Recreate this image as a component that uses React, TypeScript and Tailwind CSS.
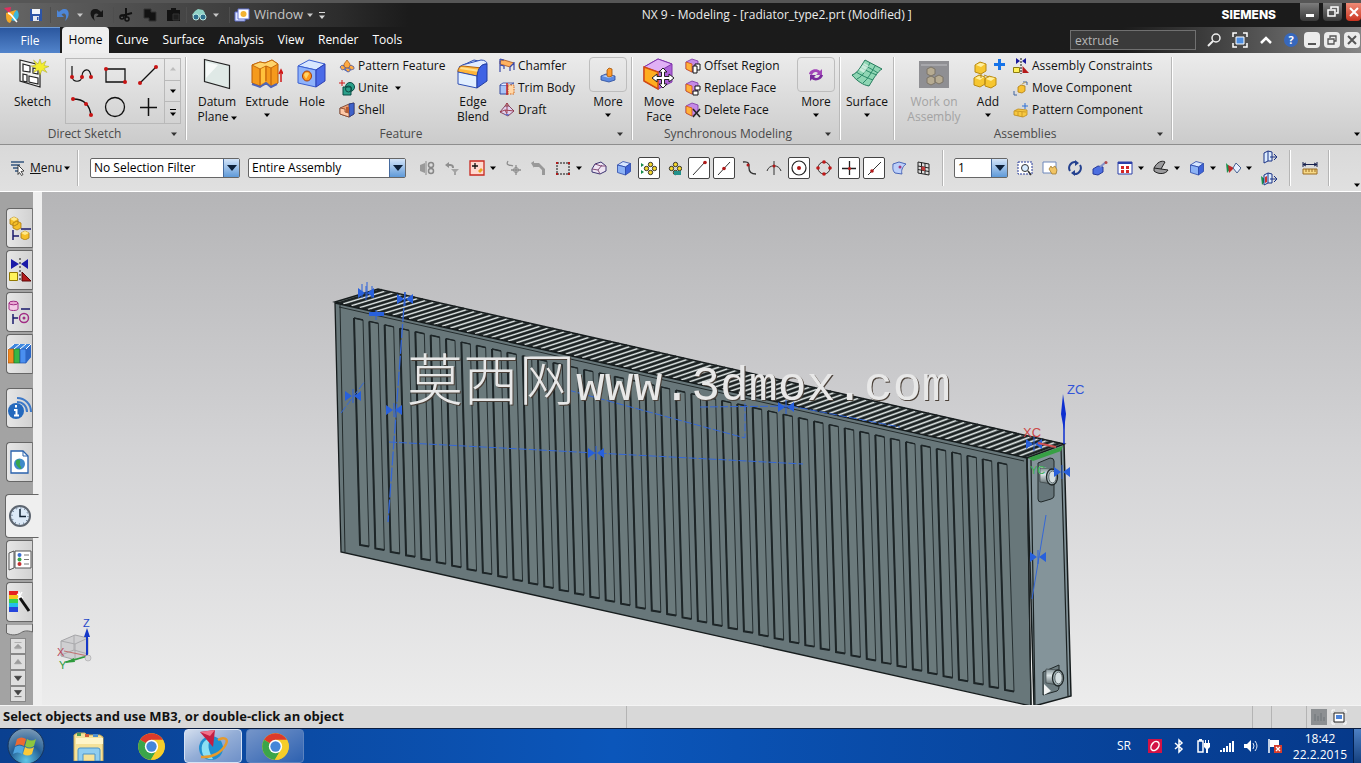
import type { ReactNode } from "react";
import clsx from "clsx";

// ─── Shared pieces ────────────────────────────────────────────────────────────

type IconProps = { children: ReactNode; size?: number; box?: number };

function Icon({ children, size = 16, box = 16 }: IconProps) {
  return (
    <svg
      width={size}
      height={size}
      viewBox={`0 0 ${box} ${box}`}
      fill="none"
      className="shrink-0"
      aria-hidden="true"
    >
      {children}
    </svg>
  );
}

function Caret({ className = "text-black" }: { className?: string }) {
  return (
    <svg width="6" height="4" viewBox="0 0 6 4" className={clsx("shrink-0", className)} aria-hidden="true">
      <path d="M0 0.5h6L3 4z" fill="currentColor" />
    </svg>
  );
}

function Cube({ top, left, right, stroke }: { top: string; left: string; right: string; stroke: string }) {
  return (
    <g stroke={stroke} strokeWidth="0.8" strokeLinejoin="round">
      <path d="M1.5 5L7 1.5l7.5 2L9.500 7z" fill={top} />
      <path d="M1.500 5L9.500 7v8L1.500 12.500z" fill={left} />
      <path d="M9.500 7l5-3.500v8L9.500 15z" fill={right} />
    </g>
  );
}

// ─── Ribbon icons ─────────────────────────────────────────────────────────────

const sketchIcon = (
  <Icon size={32} box={32}>
    <path d="M3 2l20 5v22L3 23z" fill="#f4f4f2" stroke="#222" strokeWidth="1.200" />
    <path d="M6 6l7 2v6l-7-1zM16 10l5 1v5l-5-1zM6 16l4 1v7l-4-1zM12 18l9 2v6l-9-2z" fill="#fff" stroke="#222" strokeWidth="1.200" />
    <path d="M23 1l1.500 5L29 3l-2 4.500 5 1-5 2 3 4-5-2.500L23 17l-1.500-5-5 2.500L19 10l-5-2 5-1-2.500-5L21 6z" fill="#f3ee2f" stroke="#a8a52a" strokeWidth="0.500" />
  </Icon>
);

const datumIcon = (
  <Icon size={32} box={32}>
    <path d="M3.500 1.500l25 6v23l-25-7z" fill="#dfe9e6" stroke="#222" strokeWidth="1.200" />
    <path d="M5 4l12 3L5 20z" fill="#fff" opacity="0.7" />
  </Icon>
);

const extrudeIcon = (
  <Icon size={32} box={32}>
    <path d="M1 7l8-3 5 1 7-3 6 4v19l-7 4-4-3-7 2-8-3z" fill="#f59a1c" stroke="#b75a07" />
    <path d="M1 7l8-3 5 1 7-3 6 4-7 4-5-2-6 3z" fill="#ffd46a" stroke="#c66b0c" />
    <path d="M9 11v17M15 8v15M20 10v18" stroke="#b75a07" />
    <path d="M10 11l4-2v15l-4 2z" fill="#ffc23c" />
    <path d="M1 26l8 3 6-4 5 4 6-3" stroke="#4f65b5" strokeWidth="2" />
    <path d="M30 24V13M28 16l2-4 2 4" stroke="#d01818" strokeWidth="1.500" />
  </Icon>
);

const holeIcon = (
  <Icon size={32} box={32}>
    <path d="M2 8L13 2l16 4-9 6z" fill="#d7e6ff" stroke="#3a5fd0" />
    <path d="M2 8l18 4v17L2 25z" fill="#8fb3fb" stroke="#3a5fd0" />
    <path d="M20 12l9-6v17l-9 6z" fill="#4b6be8" stroke="#2c3fb0" />
    <ellipse cx="11" cy="18" rx="4.500" ry="5" fill="#ff9a1f" stroke="#a33c08" />
    <path d="M8 17c1-3 4-3 5-1l-3 5z" fill="#ffd36a" />
  </Icon>
);

const edgeBlendIcon = (
  <Icon size={32} box={32}>
    <path d="M2 9L17 2l13 3-8 8z" fill="#cfe2ff" stroke="#2e4fb4" />
    <path d="M1 14c0-5 3-7 8-8l15-4c4 0 6 2 6 4-6 0-9 4-10 12z" fill="#e2edff" stroke="#2e4fb4" />
    <path d="M1 14c0-4 2-6 5-6l19 2c-3 2-4 4-5 8z" fill="#ffb53a" stroke="#b5650b" />
    <path d="M4 9l19 3-1 2L3 11z" fill="#ffe08d" />
    <path d="M1 14l19 4v12L1 26z" fill="#e2efff" stroke="#2e4fb4" />
    <path d="M20 18c1-8 4-12 10-12v17l-10 7z" fill="#3f63e4" stroke="#233d9f" />
  </Icon>
);

const moveFaceIcon = (
  <Icon size={32} box={32}>
    <path d="M1 9L15 1l14 5v18l-14 7-14-8z" fill="#ad62d8" stroke="#8136ad" />
    <path d="M1 9L15 1l14 5-14 8z" fill="#e0b0f5" stroke="#8136ad" />
    <path d="M1 9l14 5v17L1 23z" fill="#ffad20" stroke="#d34b12" strokeWidth="1.500" />
    <path
      d="M20 10l4 4h-2.500v4.500H26V16l5 4-5 4v-2.500h-4.500V26H24l-4 4-4-4h2.500v-4.500H14V24l-5-4 5-4v2.500h4.500V14H16z"
      fill="#fff"
      stroke="#222"
    />
  </Icon>
);

const surfaceIcon = (
  <Icon size={32} box={32}>
    <path d="M1 17C7 15 10 8 14 2l17 9c-5 3-8 9-13 17C12 27 6 23 1 17z" fill="#8fd6b4" stroke="#237b5b" />
    <path d="M6 21c6-3 9-9 13-16M12 25c5-4 8-10 12-17M5 14c5 3 11 6 17 8M9 9c5 3 11 6 17 8M11 6c5 3 10 5 16 9" stroke="#2c8a69" />
    <path d="M8 12l5-7 5 3-5 7z" fill="#e2f7ec" opacity="0.7" />
  </Icon>
);

const workIcon = (
  <Icon size={32} box={32}>
    <path d="M1 3h30v27H1z" fill="#8f8f93" />
    <path d="M3 6h26v2H3z" fill="#a7a7ab" />
    <path d="M9 11l4-2 4 2v5l-4 2-4-2zM17 19l4-2 4 2v5l-4 2-4-2zM9 20l4-2 4 2v5l-4 2-4-2z" fill="#b6ab92" stroke="#7c7568" />
  </Icon>
);

const addIcon = (
  <Icon size={32} box={32}>
    <g fill="#f6c630" stroke="#b98a12">
      <path d="M3 7l5-3 6 2v7l-5 3-6-2zM2 20l5-3 6 2v7l-5 3-6-2zM13 21l4-3 7 2v7l-5 3-6-2z" />
    </g>
    <path d="M4 7l4-2 5 1-4 3zM3 20l4-2 5 1-4 3zM14 21l3-2 6 1-4 3z" fill="#fff0a0" />
    <path d="M9 16v4M12 17l5 2" stroke="#b98a12" />
  </Icon>
);

const patternFeatureIcon = (
  <Icon>
    <path d="M1 9l7-3 7 3-6 5z" fill="#a9bff0" stroke="#3553b4" strokeWidth="0.800" />
    <path d="M5 6l3-4 3 4v3l-3 1-3-1z" fill="#ffaa42" stroke="#a5540f" strokeWidth="0.700" />
    <path d="M1 9l2-2 3 2v2l-3 1zM10 9l2-2 3 2v2l-3 1zM6 11l2-1 3 1v2l-2 1z" fill="#ffaa42" stroke="#4a5aa8" strokeWidth="0.700" />
  </Icon>
);

const uniteIcon = (
  <Icon>
    <path d="M3 0v6M0 3h6" stroke="#d01818" />
    <circle cx="11" cy="7" r="4.500" fill="#2ba08a" stroke="#0b4a42" />
    <path d="M4 7h8v8H4z" fill="#2ba08a" stroke="#0b4a42" />
    <circle cx="9.500" cy="9" r="3" stroke="#0b4a42" />
  </Icon>
);

const shellIcon = (
  <Icon>
    <path d="M1 6l9-4 5-1v11l-5 3-9-3z" fill="#ef9e70" stroke="#6b3a2b" strokeWidth="0.800" />
    <path d="M10 2l5-1v11l-5 3z" fill="#3f62c9" stroke="#253b88" strokeWidth="0.800" />
    <path d="M1 6l5 1v3l4 1v4l-9-3z" fill="#ffc8a6" stroke="#7f4128" strokeWidth="0.800" />
    <path d="M7 5h3v6l-3-1z" fill="#b85a30" />
  </Icon>
);

const chamferIcon = (
  <Icon>
    <path d="M1 3l4-1 10 3-4 4-10-3z" fill="#ffb260" stroke="#a34d1b" strokeWidth="0.800" />
    <path d="M1 1v13M1 1l4 1M11 9v4M15 4v8M11 9l4-4M1 7l4 1v3" stroke="#3948a8" strokeWidth="1.200" />
  </Icon>
);

const trimIcon = (
  <Icon>
    <path d="M1 5h8v9H1z" fill="#a9c4f6" stroke="#34489f" />
    <path d="M1 5l3-2h11l-4 2" fill="#e5edff" stroke="#34489f" strokeWidth="0.800" />
    <path d="M9 5h6v9H9z" fill="#ffd7a8" stroke="#d06418" strokeDasharray="1.500 1" />
    <path d="M8 3v12" stroke="#c92020" strokeWidth="1.500" />
  </Icon>
);

const draftIcon = (
  <Icon>
    <path d="M1 10l5-6h4l5 5-6 5z" fill="#dfd2ee" stroke="#7a3350" strokeWidth="0.900" />
    <path d="M1 10l5-2 9 1M6 8l3 6M8 1v10M6 4l2-3 2 3" stroke="#993243" strokeWidth="0.900" />
    <path d="M5 12h5l-1 2z" fill="#5b73cc" />
  </Icon>
);

const moreFeatureIcon = (
  <Icon>
    <path d="M1 9l5-2 9 2v4l-6 2-8-2z" fill="#5f8be0" stroke="#274a9b" strokeWidth="0.800" />
    <path d="M2 9l5-1 7 1-5 2z" fill="#b8d1fb" />
    <path d="M7 3l2-2 3 1v7l-3 1-2-1z" fill="#ff9b2b" stroke="#a1540a" strokeWidth="0.800" />
  </Icon>
);

const moreSyncIcon = (
  <Icon>
    <path d="M1 7c1-5 8-6 11-3l2-2v6H8l2-2C8 4 5 5 4 8z" fill="#a246b8" />
    <path d="M15 8c-1 5-8 7-11 4l-2 2V8h6l-2 2c2 2 5 1 6-2z" fill="#7a2c9c" />
  </Icon>
);

const faceCube = (
  <g strokeWidth="0.800">
    <path d="M1 4l6-3 6 2v7l-6 4-6-3z" fill="#c48ae6" stroke="#7a34a5" />
    <path d="M1 4l6 2v8l-6-3z" fill="#ffb13b" stroke="#cf5417" />
  </g>
);

const offsetRegionIcon = (
  <Icon>
    {faceCube}
    <path d="M8 8h4v7H8zM10 8V6h5v6h-3" fill="#fff" stroke="#111" />
  </Icon>
);

const replaceFaceIcon = (
  <Icon>
    {faceCube}
    <path d="M10 6h5v4h-5zM8 11h5v4H8z" fill="#fff" stroke="#111" />
  </Icon>
);

const deleteFaceIcon = (
  <Icon>
    {faceCube}
    <path d="M8 7l7 8M15 7l-7 8" stroke="#222" strokeWidth="1.500" />
  </Icon>
);

const constraintsIcon = (
  <Icon>
    <path d="M3 0l4 3-4 3zM13 0L9 3l4 3z" fill="#1a1a9c" />
    <path d="M8 0v16" stroke="#111" strokeDasharray="2 1" />
    <path d="M0.500 9.500h6v5h-6z" fill="#fff05a" stroke="#8d7d11" />
    <path d="M9.500 8v7H16z" fill="#b51a1a" />
  </Icon>
);

const moveComponentIcon = (
  <Icon>
    <path d="M5 7l3-2 4 1v5l-3 2-4-1z" fill="#f7c234" stroke="#ad7b12" strokeWidth="0.800" />
    <path d="M1 11v4h3M10 2h4v3" stroke="#41649f" />
    <path d="M9 4l4-2" stroke="#c2a55b" />
  </Icon>
);

const patternComponentIcon = (
  <Icon>
    <path d="M1 9l4-2 9 1v5l-4 2-9-2z" fill="#f7c840" stroke="#bd8a1a" strokeWidth="0.800" />
    <path d="M5 10v4M9 10v5M2 9l11 1" stroke="#bd8a1a" strokeWidth="0.700" />
    <path d="M12 1v6M9 4h6" stroke="#2c71d8" />
  </Icon>
);

// ─── Ribbon ───────────────────────────────────────────────────────────────────

type BigButtonProps = {
  icon: ReactNode;
  label: string;
  width: string;
  caret?: "inline" | "below";
  disabled?: boolean;
};

function BigButton({ icon, label, width, caret, disabled }: BigButtonProps) {
  return (
    <button
      disabled={disabled}
      className={clsx(
        "flex flex-col items-center pt-[5px] text-[12px] leading-[15px]",
        disabled ? "text-[#a3a3a3]" : "text-[#111]",
        width
      )}
    >
      {icon}
      <span className="mt-1">
        {label}
        {caret === "inline" && (
          <span className="ml-0.5 inline-block align-middle">
            <Caret />
          </span>
        )}
      </span>
      {caret === "below" && (
        <span className="mt-1">
          <Caret />
        </span>
      )}
    </button>
  );
}

function MoreButton({ icon }: { icon: ReactNode }) {
  return (
    <button className="flex w-[38px] flex-col items-center pt-1 text-[12px] leading-[15px] text-[#111]">
      <span className="flex h-[35px] w-full items-center justify-center rounded-sm border border-[#bdbdbd]">
        {icon}
      </span>
      <span className="mt-0.5">More</span>
      <span className="mt-1">
        <Caret />
      </span>
    </button>
  );
}

function SmallButton({ icon, label, caret }: { icon: ReactNode; label: string; caret?: boolean }) {
  return (
    <button className="flex h-[22px] items-center gap-[3px] text-[12px] whitespace-nowrap text-[#111]">
      {icon}
      {label}
      {caret && (
        <span className="ml-1">
          <Caret />
        </span>
      )}
    </button>
  );
}

function RibbonGroup({ label, children, launcher = true }: { label: string; children: ReactNode; launcher?: boolean }) {
  return (
    <section className="flex shrink-0 items-stretch">
      <div className="flex flex-col">
        <div className="flex h-[72px]">{children}</div>
        <div className="relative flex h-[18px] items-center justify-center pr-4 text-[12px] text-[#4a4a4a]">
          {label}
          {launcher && (
            <span className="absolute right-2">
              <Caret className="text-[#333]" />
            </span>
          )}
        </div>
      </div>
      <div className="my-1 w-0.5 border-l border-[#b9b9b9] bg-white" />
    </section>
  );
}

function SketchGallery() {
  return (
    <div className="mt-[5px] mr-1 flex h-[66px] w-[116px] border border-[#b9b9b9]">
      <div className="grid flex-1 grid-cols-3 place-items-center">
        <button aria-label="Profile">
          <Icon size={24} box={24}>
            <path d="M2 3v10c0 7 10 7 10 0s9-10 9 2" stroke="#111" strokeWidth="1.200" />
            <g fill="#c81414"><circle cx="2" cy="14" r="2" /><circle cx="12" cy="14" r="2" /><circle cx="21" cy="14" r="2" /></g>
          </Icon>
        </button>
        <button aria-label="Rectangle">
          <Icon size={24} box={24}>
            <path d="M3 6h19v13H3z" stroke="#111" strokeWidth="1.300" />
            <circle cx="3" cy="6" r="2" fill="#c81414" /><circle cx="22" cy="19" r="2" fill="#c81414" />
          </Icon>
        </button>
        <button aria-label="Line">
          <Icon size={24} box={24}>
            <path d="M4 20L20 4" stroke="#111" strokeWidth="1.300" />
            <circle cx="4" cy="20" r="2" fill="#c81414" /><circle cx="20" cy="4" r="2" fill="#c81414" />
          </Icon>
        </button>
        <button aria-label="Arc">
          <Icon size={24} box={24}>
            <path d="M3 4c11 0 17 6 18 17" stroke="#111" strokeWidth="1.300" />
            <g fill="#c81414"><circle cx="3" cy="4" r="2" /><circle cx="16" cy="9" r="2" /><circle cx="21" cy="20" r="2" /></g>
          </Icon>
        </button>
        <button aria-label="Circle">
          <Icon size={24} box={24}>
            <circle cx="12" cy="12" r="9.500" stroke="#111" strokeWidth="1.300" />
          </Icon>
        </button>
        <button aria-label="Point">
          <Icon size={24} box={24}>
            <path d="M12.500 3v18M4 12.500h17" stroke="#111" strokeWidth="1.500" />
          </Icon>
        </button>
      </div>
      <div className="flex w-4 flex-col divide-y divide-[#b9b9b9] border-l border-[#b9b9b9]">
        <button aria-label="Scroll up" className="flex flex-1 items-center justify-center">
          <Caret className="rotate-180 text-[#bdbdbd]" />
        </button>
        <button aria-label="Scroll down" className="flex flex-1 items-center justify-center">
          <Caret />
        </button>
        <button aria-label="Expand gallery" className="flex flex-1 flex-col items-center justify-center gap-0.5">
          <span className="h-px w-1.5 bg-black" />
          <Caret />
        </button>
      </div>
    </div>
  );
}

function Ribbon() {
  return (
    <div className="flex h-[92px] shrink-0 border-b border-[#8e8e8e] bg-linear-to-b from-[#ececec] to-[#cbcbcb]">
      <RibbonGroup label="Direct Sketch">
        <BigButton icon={sketchIcon} label="Sketch" width="w-[65px]" />
        <SketchGallery />
      </RibbonGroup>
      <RibbonGroup label="Feature">
        <div className="w-1" />
        <BigButton icon={datumIcon} label="Datum Plane" width="w-[52px]" caret="inline" />
        <BigButton icon={extrudeIcon} label="Extrude" width="w-[48px]" caret="below" />
        <BigButton icon={holeIcon} label="Hole" width="w-[42px]" />
        <div className="w-[116px] pt-0.5 pl-1.5">
          <SmallButton icon={patternFeatureIcon} label="Pattern Feature" />
          <SmallButton icon={uniteIcon} label="Unite" caret />
          <SmallButton icon={shellIcon} label="Shell" />
        </div>
        <BigButton icon={edgeBlendIcon} label="Edge Blend" width="w-[48px]" />
        <div className="w-[92px] pt-0.5 pl-0.5">
          <SmallButton icon={chamferIcon} label="Chamfer" />
          <SmallButton icon={trimIcon} label="Trim Body" />
          <SmallButton icon={draftIcon} label="Draft" />
        </div>
        <MoreButton icon={moreFeatureIcon} />
        <div className="w-1" />
      </RibbonGroup>
      <RibbonGroup label="Synchronous Modeling">
        <div className="w-0.5" />
        <BigButton icon={moveFaceIcon} label="Move Face" width="w-[48px]" />
        <div className="w-[114px] pt-0.5 pl-0.5">
          <SmallButton icon={offsetRegionIcon} label="Offset Region" />
          <SmallButton icon={replaceFaceIcon} label="Replace Face" />
          <SmallButton icon={deleteFaceIcon} label="Delete Face" />
        </div>
        <MoreButton icon={moreSyncIcon} />
        <div className="w-1" />
      </RibbonGroup>
      <RibbonGroup label="" launcher={false}>
        <BigButton icon={surfaceIcon} label="Surface" width="w-[52px]" caret="below" />
      </RibbonGroup>
      <RibbonGroup label="Assemblies">
        <div className="w-2" />
        <BigButton icon={workIcon} label="Work on Assembly" width="w-[62px]" disabled />
        <div className="relative">
          <BigButton icon={addIcon} label="Add" width="w-[46px]" caret="below" />
          <svg width="11" height="11" viewBox="0 0 11 11" className="absolute top-1.5 right-1.5" aria-hidden="true">
            <path d="M5.500 0v11M0 5.500h11" stroke="#1673e8" strokeWidth="3" />
          </svg>
        </div>
        <div className="w-[160px] pt-0.5 pl-0.5">
          <SmallButton icon={constraintsIcon} label="Assembly Constraints" />
          <SmallButton icon={moveComponentIcon} label="Move Component" />
          <SmallButton icon={patternComponentIcon} label="Pattern Component" />
        </div>
      </RibbonGroup>
      <div className="flex flex-1 items-end justify-end pr-px pb-2">
        <Caret />
      </div>
    </div>
  );
}

// ─── Title bar and tabs ───────────────────────────────────────────────────────

function BarDivider() {
  return <span className="mx-1 h-4 w-px bg-[#4e4e4e]" />;
}

function TitleBar() {
  return (
    <header className="flex h-[27px] shrink-0 items-center border-t-3 border-[#565656] bg-linear-to-r from-[#666] via-[#2c2c2c] via-25% to-[#1b1b1b] to-30%">
      <div className="flex w-[332px] items-center">
        <div className="flex w-7 pl-0.5">
          <Icon size={18} box={18}>
            <path d="M2 2l7-1-1 7z" fill="#e0305f" />
            <path d="M4 7c0 5 0 9 4 10l5-8 1-5z" fill="#f4a829" />
            <path d="M9 14c3-3 2-8 6-10 3 4 2 10-3 11z" fill="#3cb6dd" />
            <path d="M6 7c4 1 5 5 9 9" stroke="#fff" strokeWidth="1.500" />
          </Icon>
        </div>
        <button aria-label="Save">
          <Icon>
            <path d="M2 2h12v12H2z" fill="#2d55a8" />
            <path d="M4 2h8v5H4z" fill="#f2f5fb" />
            <path d="M5 9h6v5H5z" fill="#e5e8ef" />
            <path d="M9 10h1.500v3H9z" fill="#2d55a8" />
          </Icon>
        </button>
        <span className="w-0.5" />
        <BarDivider />
        <button aria-label="Undo">
          <Icon>
            <path d="M2 3v7h7L6.500 7.500C9 5 13 7 10 14c6-5 4-13-1-12-2 0-4 2-5 3z" fill="#4d86d8" />
          </Icon>
        </button>
        <button aria-label="Undo list" className="px-1.5">
          <Caret className="text-[#c8c8c8]" />
        </button>
        <button aria-label="Redo" className="mr-1">
          <Icon>
            <path d="M14 3v7H7l2.500-2.500C7 5 3 7 6 14-1 9 1 1 7 2c2 0 4 2 5 3z" fill="#161616" />
          </Icon>
        </button>
        <BarDivider />
        <button aria-label="Cut">
          <Icon>
            <path d="M8 1v9M14 6L3 9" stroke="#111" strokeWidth="2" />
            <circle cx="4" cy="10" r="2" stroke="#111" strokeWidth="1.500" />
            <circle cx="9" cy="12" r="2" stroke="#111" strokeWidth="1.500" />
          </Icon>
        </button>
        <button aria-label="Copy" className="ml-2">
          <Icon>
            <path d="M2 2h7v3h5v9H7v-3H2z" fill="#121212" stroke="#333" />
          </Icon>
        </button>
        <button aria-label="Paste" className="ml-2">
          <Icon>
            <path d="M1 3h4V1h5v2h4v11H1z" fill="#121212" />
            <path d="M7 7h6v6H7z" fill="#1e1e1e" stroke="#333" />
          </Icon>
        </button>
        <BarDivider />
        <button aria-label="Find command">
          <Icon>
            <path d="M4 4l3-2 5 1 2 3-1 4H3L1 8z" fill="#8fd3c5" />
            <circle cx="5" cy="10" r="3" fill="#2d6f8c" stroke="#bde8e0" />
            <circle cx="12" cy="10" r="3" fill="#2d6f8c" stroke="#bde8e0" />
          </Icon>
        </button>
        <button aria-label="Find list" className="px-1.5">
          <Caret className="text-[#c8c8c8]" />
        </button>
        <BarDivider />
        <button className="flex items-center gap-1 text-[13px] text-[#c4c4c4]">
          <Icon>
            <path d="M1 5h10v9H1z" fill="#dfe6ff" stroke="#6071d0" />
            <path d="M4 2h11v10H4z" fill="#fff" stroke="#6071d0" />
            <circle cx="9.500" cy="7" r="3" fill="#f2b233" />
          </Icon>
          Window
          <Caret className="text-[#c8c8c8]" />
        </button>
        <button aria-label="Customize" className="ml-1.5 flex flex-col items-center gap-0.5">
          <span className="h-px w-1.5 bg-[#d8d8d8]" />
          <Caret className="text-[#d8d8d8]" />
        </button>
      </div>
      <h1 className="flex-1 truncate text-center text-[12px] text-[#ececec]">
        NX 9 - Modeling - [radiator_type2.prt (Modified) ]
      </h1>
      <span className="font-['Inter','Liberation_Sans',sans-serif] text-[12px] font-extrabold text-white">SIEMENS</span>
      <div className="ml-6 flex gap-1 self-start">
        <button aria-label="Minimize" className="flex h-[18px] w-[19px] justify-center rounded-b-sm bg-linear-to-b from-[#7d7d7d] to-[#3a3a3a] pt-[11px]">
          <span className="h-[3px] w-2 bg-white" />
        </button>
        <button aria-label="Restore" className="flex h-[18px] w-[19px] items-center justify-center rounded-b-sm bg-linear-to-b from-[#7d7d7d] to-[#3a3a3a]">
          <Icon size={12} box={12}>
            <path d="M4 3V1h7v6H9M1 4h7v6H1z" stroke="#fff" strokeWidth="1.500" />
          </Icon>
        </button>
        <button aria-label="Close" className="flex h-[18px] w-[15px] items-center justify-center rounded-b-sm bg-linear-to-b from-[#ee8a76] to-[#c9321e]">
          <Icon size={12} box={12}>
            <path d="M2 2l8 8M10 2l-8 8" stroke="#fff" strokeWidth="2" />
          </Icon>
        </button>
      </div>
    </header>
  );
}

const TABS = ["Curve", "Surface", "Analysis", "View", "Render", "Tools"];

function TabRow() {
  return (
    <nav className="flex h-[26px] shrink-0 bg-[#1b1b1b] text-[12px]">
      <button className="w-[60px] border-t border-[#6f9bd5] bg-linear-to-b from-[#2b579f] to-[#5284cb] text-white">
        File
      </button>
      <button className="ml-0.5 w-[47px] rounded-t-sm bg-[#efefef] text-black">Home</button>
      {TABS.map((tab) => (
        <button key={tab} className="px-[7px] text-white">
          {tab}
        </button>
      ))}
      <div className="flex flex-1 items-center justify-end bg-linear-to-r from-[#1b1b1b] from-75% to-[#858585] pr-px">
        <input
          aria-label="Command finder"
          defaultValue="extrude"
          className="h-5 w-[126px] border border-[#707070] bg-[#3a3a3a] px-1 text-[12px] text-[#b8b8b8]"
        />
        <div className="flex items-center gap-2.5 pl-2.5">
          <button aria-label="Search">
            <Icon>
              <circle cx="10" cy="6" r="4" stroke="#eee" strokeWidth="1.500" />
              <path d="M7 9l-5 5" stroke="#eee" strokeWidth="2" />
            </Icon>
          </button>
          <button aria-label="Full screen">
            <Icon>
              <path d="M1 5V1h4M11 1h4v4M15 11v4h-4M5 15H1v-4" stroke="#fff" strokeWidth="1.500" />
              <path d="M4 5h8v7H4z" fill="#4c8de0" stroke="#fff" />
            </Icon>
          </button>
          <button aria-label="Minimize ribbon">
            <Icon>
              <path d="M3 11l5-5 5 5" stroke="#fff" strokeWidth="2.500" />
            </Icon>
          </button>
          <button aria-label="Help" className="flex h-[14px] w-[14px] items-center justify-center rounded-full bg-[#3768bd] text-[11px] font-bold text-white">
            ?
          </button>
        </div>
        <div className="flex gap-1 pl-1.5">
          <button aria-label="Minimize part" className="flex h-4 w-4 items-end justify-center rounded-sm bg-[#ececec] pb-[3px]">
            <span className="h-0.5 w-2 bg-[#555]" />
          </button>
          <button aria-label="Restore part" className="flex h-4 w-4 items-center justify-center rounded-sm bg-[#ececec]">
            <Icon size={10} box={10}>
              <path d="M3 3V1h6v5H7M1 4h6v5H1z" stroke="#555" strokeWidth="1.300" />
            </Icon>
          </button>
          <button aria-label="Close part" className="flex h-4 w-4 items-center justify-center rounded-sm bg-[#ececec]">
            <Icon size={10} box={10}>
              <path d="M1 1l8 8M9 1L1 9" stroke="#555" strokeWidth="2" />
            </Icon>
          </button>
        </div>
      </div>
    </nav>
  );
}

// ─── Selection bar ────────────────────────────────────────────────────────────

function DropDown({ label, value, width }: { label: string; value: string; width: string }) {
  return (
    <div className={clsx("relative h-5 shrink-0", width)}>
      <select
        aria-label={label}
        className="block h-5 w-full appearance-none rounded-xs border border-[#666] bg-white py-0 pl-[3px] text-[12px] leading-[18px] text-black"
      >
        <option>{value}</option>
      </select>
      <span className="pointer-events-none absolute top-px right-px bottom-px flex w-4 items-center justify-center border-l border-[#456a9e] bg-linear-to-b from-[#d3e4f8] to-[#5f9ad8]">
        <svg width="10" height="6" viewBox="0 0 10 6" aria-hidden="true">
          <path d="M0 0h10L5 6z" fill="#0c1f38" />
        </svg>
      </span>
    </div>
  );
}

type ToolProps = { label: string; children: ReactNode; boxed?: boolean; caret?: boolean };

function Tool({ label, children, boxed, caret }: ToolProps) {
  return (
    <>
      <button aria-label={label} className="flex w-[25px] shrink-0 justify-center">
        <span className={clsx("flex h-[22px] w-[22px] items-center justify-center", boxed && "rounded-xs border border-[#444] bg-white")}>
          <Icon>{children}</Icon>
        </span>
      </button>
      {caret && (
        <span className="-ml-1 flex w-[15px] shrink-0 justify-center">
          <Caret />
        </span>
      )}
    </>
  );
}

function VerticalRule() {
  return <div className="h-9 w-0.5 shrink-0 border-l border-[#b5b5b5] bg-white" />;
}

const flower = (
  <g fill="#f4d62a" stroke="#222" strokeWidth="0.900">
    <circle cx="9.500" cy="4.500" r="2.200" />
    <circle cx="9.500" cy="12.500" r="2.200" />
    <circle cx="5.500" cy="8.500" r="2.200" />
    <circle cx="13.500" cy="8.500" r="2.200" />
  </g>
);

const blueCube = <Cube top="#d6e6ff" left="#8cb2f5" right="#3e63d8" stroke="#2a48a8" />;

function SelectionBar() {
  return (
    <div className="flex h-[47px] shrink-0 items-center border-b border-white bg-linear-to-b from-[#d9d9d9] to-[#e0e0e0]">
      <button className="flex w-[77px] items-center pl-2.5 text-[12px] text-[#111]">
        <Icon>
          <path d="M1 2h13M1 5h9M3 8h8M5 11h6" stroke="#33557f" strokeWidth="1.500" />
          <path d="M8 5l6 6-3 .5 2 3-1.500 1-2-3-1.500 2z" fill="#fff" stroke="#222" strokeWidth="0.800" />
        </Icon>
        <span className="ml-1">
          <span className="underline">M</span>enu
        </span>
        <span className="ml-0.5">
          <Caret />
        </span>
      </button>
      <VerticalRule />
      <div className="flex gap-2 pr-2 pl-[11px]">
        <DropDown label="Selection filter" value="No Selection Filter" width="w-[150px]" />
        <DropDown label="Selection scope" value="Entire Assembly" width="w-[158px]" />
      </div>
      <Tool label="Reset filters">
        <path d="M1 5l5-2v10l-5-2z" fill="#999" />
        <path d="M7 1v14" stroke="#888" />
        <circle cx="12" cy="5" r="2.500" stroke="#888" strokeWidth="1.500" />
        <circle cx="12" cy="11" r="2.500" stroke="#888" strokeWidth="1.500" />
      </Tool>
      <Tool label="Allow selection">
        <path d="M1 5l4-3v2c4 0 5 1 5 4H8c0-2-1-2-3-2v2z" fill="#8f8f8f" />
        <path d="M7 9h8l-3 3v3h-2v-3z" fill="#a4a4a4" />
      </Tool>
      <Tool label="Selection intent" caret>
        <path d="M1 1h14v14H1z" fill="#ffd9cf" stroke="#c9281f" strokeWidth="1.300" />
        <path d="M6 3v6M3 6h6" stroke="#111" strokeWidth="1.300" />
        <path d="M9 11l3-3 2 2-3 3z" fill="#e7a51c" />
      </Tool>
      <Tool label="Orient">
        <path d="M3 1C0 6 6 5 8 6M11 5v10M6 10h10" stroke="#8d8d8d" strokeWidth="1.300" />
        <circle cx="11" cy="10" r="2.500" stroke="#8d8d8d" />
      </Tool>
      <Tool label="Follow fillet">
        <path d="M1 3l3-2v2h5l6 6v6h-3v-5L9 7H4v1z" fill="#999" />
      </Tool>
      <Tool label="Rectangle select" caret>
        <path d="M2 3h12v11H2z" stroke="#111" strokeDasharray="2 1" />
        <g fill="#b01818"><path d="M1 2h2v2H1zM13 2h2v2h-2zM1 13h2v2H1zM13 13h2v2h-2z" /></g>
      </Tool>
      <Tool label="Wireframe body">
        <path d="M1 9l3-5 6-2 5 4v5l-6 3-8-2z" fill="#eee4f2" stroke="#3c3472" />
        <path d="M1 9l6 1 4-5M7 10l2 4M4 4l6 2 5 0" stroke="#83507a" />
      </Tool>
      <Tool label="Solid body">{blueCube}</Tool>
      <Tool label="Snap point" boxed>
        <path d="M0 3l3 2-3 2zM0 10l3 2-3 2z" fill="#138a48" />
        {flower}
      </Tool>
      <Tool label="Snap options">
        {flower}
        <path d="M8 11h7v4H8z" fill="#23918b" />
      </Tool>
      <Tool label="End point" boxed>
        <path d="M2 15L14 2" stroke="#333" />
        <circle cx="14" cy="2.500" r="1.800" fill="#b01818" />
      </Tool>
      <Tool label="Mid point" boxed>
        <path d="M2 15L14 2" stroke="#333" />
        <circle cx="8" cy="8.500" r="1.800" fill="#b01818" />
      </Tool>
      <Tool label="Control point">
        <path d="M2 2c7-1 6 3 6 6s1 6 7 6" stroke="#333" strokeWidth="1.300" />
        <circle cx="7" cy="5" r="1.500" fill="#b01818" />
      </Tool>
      <Tool label="Intersection">
        <path d="M8 1v14M1 11c2-7 12-7 14 0" stroke="#333" />
        <circle cx="8" cy="6" r="1.500" fill="#b01818" />
      </Tool>
      <Tool label="Arc center" boxed>
        <circle cx="8" cy="8" r="7" stroke="#222" strokeWidth="1.200" />
        <circle cx="8" cy="8" r="2" fill="#b01818" />
      </Tool>
      <Tool label="Quadrant">
        <circle cx="8" cy="8" r="6" stroke="#333" />
        <g fill="#c01818"><circle cx="8" cy="2" r="1.800" /><circle cx="8" cy="14" r="1.800" /><circle cx="2" cy="8" r="1.800" /><circle cx="14" cy="8" r="1.800" /></g>
      </Tool>
      <Tool label="Existing point" boxed>
        <path d="M8.500 1v14M1 8.500h14" stroke="#222" strokeWidth="1.300" />
        <circle cx="8.500" cy="8.500" r="1.500" fill="#c01818" />
      </Tool>
      <Tool label="Point on curve" boxed>
        <path d="M2 15L15 2" stroke="#333" />
        <circle cx="6" cy="11" r="1.800" fill="#b01818" />
      </Tool>
      <Tool label="Point on face">
        <path d="M2 4l6-2 7 2c-4 3-5 7-4 10l-7-1c-3-3-2-6-2-9z" fill="#bcd0fa" stroke="#4a66b8" />
        <circle cx="9" cy="7" r="1.500" fill="#a0397e" />
      </Tool>
      <Tool label="Grid point">
        <path d="M2 2l11 2v11L2 13zM5.500 2.500v11M9 3v11M2 6l11 2M2 9.500l11 2" stroke="#222" />
        <path d="M5.500 6.500l3.500.5v4l-3.500-1z" fill="#c43a3a" />
      </Tool>
      <span className="w-1.5 shrink-0" />
      <VerticalRule />
      <div className="pr-1 pl-2.5">
        <DropDown label="Work layer" value="1" width="w-[54px]" />
      </div>
      <div className="flex shrink-0 items-center">
        <Tool label="Zoom">
          <path d="M1 2h14v12H1z" fill="#fff" stroke="#2b3f9c" strokeDasharray="2 1" />
          <circle cx="8" cy="8" r="3.500" fill="#d8ecff" stroke="#333" />
          <path d="M11 11l3 4" stroke="#333" strokeWidth="1.500" />
        </Tool>
        <Tool label="Pan">
          <path d="M1 2h13v11H1z" fill="#fff" stroke="#6d87bb" />
          <path d="M7 9l2-3 1 2 3-2 2 4-1 4h-4z" fill="#f1c463" stroke="#997225" strokeWidth="0.700" />
        </Tool>
        <Tool label="Rotate">
          <path d="M3 11A6 6 0 019 2M13 5a6 6 0 01-6 9" stroke="#24418f" strokeWidth="2" />
          <path d="M8 0l4 3-4 3zM8 10l-4 3 4 3z" fill="#24418f" />
        </Tool>
        <Tool label="Perspective">
          <path d="M1 9l5-3 5 1v5l-5 3-5-1z" fill="#4d6fe0" stroke="#25399b" />
          <path d="M8 7l6-5" stroke="#8391c9" strokeWidth="2" />
          <circle cx="14" cy="2.500" r="1.500" fill="#b34a4a" />
        </Tool>
        <Tool label="Fit" caret>
          <path d="M1 2h14v12H1z" fill="#fff" stroke="#2b3fa8" />
          <path d="M1 2h14v2H1z" fill="#2b3fa8" />
          <path d="M4 6h3v3H4zM9 6h3v3H9zM4 10h3v3H4zM9 10h3v3H9z" fill="#d32828" />
        </Tool>
        <Tool label="Orient view" caret>
          <path d="M1 8C4 2 9 0 12 2L8 9l7 1c-2 4-9 5-14 1z" fill="#9b9b9d" stroke="#222" />
          <path d="M1 8l7 1" stroke="#222" />
        </Tool>
        <Tool label="Rendering style" caret>{blueCube}</Tool>
        <Tool label="Section" caret>
          <path d="M1 3l5 5-4 5z" fill="#18924b" />
          <path d="M3 5l6 3-5 5z" fill="#c12a2a" />
          <path d="M11 3l5 5-4 5-4-5z" fill="#e5efff" stroke="#47608f" />
        </Tool>
        <div className="flex flex-col">
          <Tool label="Clip section">
            <path d="M3 4l4-2v10l-4 2zM7 2l4 1v9l-4 0" fill="#dcecff" stroke="#1b3385" />
            <path d="M9 8h7M13 5l3 3-3 3" stroke="#1b3385" />
          </Tool>
          <Tool label="Edit section">
            <path d="M0 5l5 4-4 5z" fill="#17924a" />
            <path d="M3 4l4-2v10l-4 2zM7 2l4 1v9l-4 0" fill="#dcecff" stroke="#1b3385" />
            <path d="M4 6l2-1v6l-2 1z" fill="#cc3131" />
            <path d="M9 8h7M13 5l3 3-3 3" stroke="#1b3385" />
          </Tool>
        </div>
      </div>
      <span className="w-2 shrink-0" />
      <VerticalRule />
      <span className="w-1.5 shrink-0" />
      <Tool label="Measure distance">
        <path d="M1 2v5M15 2v5M1 4.500h14M4 3L1 4.500 4 6M12 3l3 1.500L12 6" stroke="#17214e" />
        <path d="M1 9h14v5H1z" fill="#f7d987" stroke="#9b6d21" />
        <path d="M4 9v3M7 9v3M10 9v3M13 9v3" stroke="#9b6d21" />
      </Tool>
      <span className="w-1.5 shrink-0" />
      <VerticalRule />
      <div className="flex h-full flex-1 items-end justify-end pr-px pb-1">
        <Caret />
      </div>
    </div>
  );
}

// ─── Resource bar ─────────────────────────────────────────────────────────────

const RESOURCES: { label: string; gap?: boolean; active?: boolean; icon: ReactNode }[] = [
  {
    label: "Assembly Navigator",
    icon: (
      <>
        <path d="M5 14v12M5 20h6M13 13h10" stroke="#1a1a6c" strokeWidth="1.500" />
        <path d="M2 3l4-2 4 2v5l-4 2-4-2zM5 7l4-2 4 2v5l-4 2-4-2zM13 17l4-2 4 2v5l-4 2-4-2z" fill="#f5bf28" stroke="#a97a10" strokeWidth="0.800" />
        <path d="M2 3l4-2 4 2-4 2zM13 17l4-2 4 2-4 2z" fill="#ffe98a" />
      </>
    ),
  },
  {
    label: "Constraint Navigator",
    icon: (
      <>
        <path d="M3 1l8 5-8 5zM20 1l-7 5 7 5z" fill="#1a1aa8" />
        <path d="M12 0v24" stroke="#111" strokeDasharray="2 2" />
        <path d="M1.500 14.500h8v8h-8z" fill="#fff35a" stroke="#937900" />
        <path d="M14 14v9h9z" fill="#b31b1b" stroke="#5c0808" />
      </>
    ),
  },
  {
    label: "Part Navigator",
    icon: (
      <>
        <path d="M5 14v11M5 18h5M13 9h9" stroke="#1a1a6c" strokeWidth="1.500" />
        <path d="M1 3v6c0 2 9 2 9 0V3" fill="#f3cbe6" stroke="#a12d84" />
        <ellipse cx="5.500" cy="3" rx="4.500" ry="1.800" fill="#e9a6d3" stroke="#a12d84" />
        <circle cx="16" cy="18" r="4.500" stroke="#a12d84" strokeWidth="1.500" />
        <circle cx="16" cy="18" r="1.500" fill="#a12d84" />
      </>
    ),
  },
  {
    label: "Reuse Library",
    icon: (
      <>
        <path d="M0 7l6-5h17v13l-5 6H0z" fill="#3e87e0" />
        <path d="M0 7h6v14H0z" fill="#f18a22" stroke="#a94f0a" strokeWidth="0.700" />
        <path d="M6 7h6v14H6z" fill="#38b545" stroke="#1b7a27" strokeWidth="0.700" />
        <path d="M12 7h6v14h-6z" fill="#4a8ff0" stroke="#1c4fa8" strokeWidth="0.700" />
        <path d="M18 7l5-5v13l-5 6z" fill="#2c67c6" />
        <path d="M0 7l6-5M6 7l6-5M12 7l6-5M18 7l5-5" stroke="#fff" />
      </>
    ),
  },
  {
    label: "HD3D Tools",
    gap: true,
    icon: (
      <>
        <path d="M9 2c8 0 14 6 14 14M9 6c6 0 10 4 10 10" stroke="#3d79c8" strokeWidth="2" />
        <circle cx="8" cy="15" r="8" fill="#2469bd" />
        <path d="M8 9v2.500M6 14h2.500v5M6 19.500h5" stroke="#fff" strokeWidth="2" />
      </>
    ),
  },
  {
    label: "Web Browser",
    gap: true,
    icon: (
      <>
        <path d="M3 1h12l5 5v17H3z" fill="#fff" stroke="#2a62ad" strokeWidth="1.300" />
        <path d="M15 1v5h5" stroke="#2a62ad" />
        <circle cx="11.500" cy="14" r="5.500" fill="#3f8ac9" />
        <path d="M8 11c3-3 5-1 4 2s2 3 1 6c-3-1-6-5-5-8z" fill="#37a64c" />
      </>
    ),
  },
  {
    label: "History",
    gap: true,
    active: true,
    icon: (
      <>
        <circle cx="12" cy="12" r="10" fill="#dce9f7" stroke="#5d6570" strokeWidth="2" />
        <circle cx="12" cy="12" r="8" stroke="#34506d" strokeDasharray="1 3.200" />
        <path d="M12 5v7.500h6" stroke="#123" strokeWidth="1.500" />
      </>
    ),
  },
  {
    label: "Roles",
    icon: (
      <>
        <path d="M1 5l5-2v17l-5 2z" fill="#f4f4f4" stroke="#555" />
        <path d="M7 3h16v17H7z" fill="#fff" stroke="#555" />
        <circle cx="11.500" cy="7" r="2" fill="#3b6fd0" />
        <circle cx="11.500" cy="11.500" r="2" fill="#3aa24a" />
        <circle cx="11.500" cy="16" r="2" fill="#c53030" />
        <path d="M16 7h5M16 11.500h5M16 16h5" stroke="#777" />
      </>
    ),
  },
  {
    label: "System Materials",
    icon: (
      <>
        <path d="M1 1h9v5H1z" fill="#e62222" />
        <path d="M1 5h9v5H1z" fill="#f8c81c" />
        <path d="M1 9h9v5H1z" fill="#38d24a" />
        <path d="M1 13h9v5H1z" fill="#23bfe8" />
        <path d="M1 17h9v5H1z" fill="#2645dc" />
        <path d="M9 4l6 4M14 2l-4 7M11 2l2 9" stroke="#fff" strokeWidth="1.500" />
        <path d="M12 8l9 13" stroke="#111" strokeWidth="3" />
      </>
    ),
  },
];

const SCROLLERS = [
  { label: "Scroll to top", path: "M4 4h8M8 6l4 4H4zM4 11h8", color: "#9c9c9c" },
  { label: "Scroll up", path: "M8 5l4 5H4z", color: "#9c9c9c" },
  { label: "Scroll down", path: "M4 6h8l-4 5z", color: "#444" },
  { label: "Scroll to bottom", path: "M4 4h8L8 9zM4 11h8", color: "#444" },
];

function ResourceBar() {
  return (
    <aside className="flex w-[42px] shrink-0 bg-linear-to-r from-[#a3a3a3] from-78% to-[#efefef] to-78%">
      <div className="flex w-full flex-col gap-0.5 pt-4">
        {RESOURCES.map((item) => (
          <button
            key={item.label}
            aria-label={item.label}
            className={clsx(
              "flex shrink-0 items-center rounded-l-sm border border-[#666]",
              item.active
                ? "ml-[5px] h-11 w-[34px] border-r-transparent bg-[#efefef] pl-0.5"
                : "ml-1.5 h-10 w-[27px] overflow-hidden border-r-[#777] bg-linear-to-r from-[#e6e6e6] to-[#d2d2d2] pl-px",
              item.gap && (item.active ? "mt-2.5" : "mt-3")
            )}
          >
            <Icon size={24} box={24}>{item.icon}</Icon>
          </button>
        ))}
        <svg width="27" height="12" viewBox="0 0 26 12" className="ml-1.5 shrink-0" aria-hidden="true">
          <path d="M0 0h26v8c-6-2-9-1-12 1S5 12 0 9z" fill="#dcdcdc" stroke="#666" />
        </svg>
        <div className="ml-2.5 flex flex-col">
          {SCROLLERS.map((item) => (
            <button key={item.label} aria-label={item.label} className="h-4 w-4 border border-[#888] bg-[#dedede]">
              <svg viewBox="0 0 16 16" className="h-full w-full" fill={item.color} stroke={item.color} aria-hidden="true">
                <path d={item.path} strokeWidth="0.800" />
              </svg>
            </button>
          ))}
        </div>
      </div>
    </aside>
  );
}

// ─── Model view ───────────────────────────────────────────────────────────────

const SLOTS = Array.from({ length: 43 }, (_, i) => i);
const FINS = Array.from({ length: 84 }, (_, i) => i);

const lerp = (a: number, b: number, t: number) => a + (b - a) * t;

// bow-tie marker of a symmetric constraint
function Marker({ x, y }: { x: number; y: number }) {
  return (
    <path
      transform={`translate(${x} ${y})`}
      d="M-8 -5l7 5-7 5zM8 -5l-7 5 7 5zM-0.500 -7h1v14h-1z"
      fill="#2860dc"
    />
  );
}

function Pipe({ x, y }: { x: number; y: number }) {
  return (
    <g>
      <path d={`M${x - 12} ${y - 9}l12 1v15l-12 -2z`} fill="url(#pipe)" stroke="#333b3d" strokeWidth="0.600" />
      <ellipse cx={x} cy={y} rx="5.500" ry="8" fill="#a9babd" stroke="#1f2627" strokeWidth="1.300" />
      <ellipse cx={x + 0.500} cy={y} rx="3.700" ry="6" fill="#d6e0e2" stroke="#333b3d" strokeWidth="0.700" />
    </g>
  );
}

function Radiator() {
  return (
    <g>
      <path d="M335 302L378 289 1064 444 1027 458z" fill="#76807f" stroke="#161c1d" strokeWidth="1.500" />
      {FINS.map((i) => {
        const t = (i + 0.500) / FINS.length;
        const x1 = lerp(335, 1027, t);
        const y1 = lerp(302, 458, t);
        const x2 = lerp(378, 1064, t);
        const y2 = lerp(289, 444, t);
        return (
          <g key={i}>
            <path d={`M${x1} ${y1}L${x2} ${y2}`} stroke="#1c2223" strokeWidth="2.200" />
            <path d={`M${x1 + 4} ${y1 + 1}L${x2 + 2} ${y2 + 1.600}`} stroke="#e4e8e8" strokeWidth="1" />
          </g>
        );
      })}
      <path d="M335 303L1027 458 1031 706 341 552z" fill="#68777a" stroke="#161c1d" strokeWidth="1.300" />
      <path d="M339 307L1024 461M340 305l5 247" stroke="#232b2c" strokeWidth="1" />
      {SLOTS.map((i) => {
        const t = i / (SLOTS.length - 1);
        const x = lerp(354, 998, t);
        const top = lerp(318, 462.500, t);
        const bx = lerp(360, 1005, t);
        const bottom = lerp(545, 690, t);
        return (
          <g key={i}>
            <path d={`M${x} ${top}l9 2L${bx + 9} ${bottom + 1.500}l-9 -1.500z`} fill="#6b7a7c" stroke="#252e30" strokeWidth="1" />
            <path d={`M${x} ${top}L${bx} ${bottom}l9 1.500`} stroke="#1d2527" strokeWidth="2" />
            <path d={`M${x} ${top}l9 2`} stroke="#1d2527" strokeWidth="1.400" />
          </g>
        );
      })}
      <path d="M1027 458L1064 444 1071 696 1034 706z" fill="#84949a" stroke="#161c1d" strokeWidth="1.500" />
      <path d="M1027 458l4 248M1031 460l4 245M1061 447l7 249" stroke="#1b2223" strokeWidth="1.200" />
      <path d="M1028 458l35-12-2 5-28 10z" fill="#37a044" />
      <path d="M1038 463l12-5q4 0 4 3v35q0 2-3 3l-10 3q-3 0-3-3z" fill="#66757a" stroke="#202829" />
      <path d="M1039 466l12 3v8l-12-3z" fill="#a8d7b5" />
      <path d="M1043 672v23l14-4q2-1 2-4v-22z" fill="#6d7c80" stroke="#202829" />
      <path d="M1044 684l7 7-7 4z" fill="#f1f3f3" />
      <Pipe x={1052} y={477} />
      <Pipe x={1058} y={678} />
    </g>
  );
}

function ModelView() {
  return (
    <main className="min-w-0 flex-1 overflow-hidden bg-linear-to-b from-[#b5b5b7] via-[#d3d3d5] via-50% to-[#ececec]">
      <svg viewBox="42 192 1319 513" preserveAspectRatio="xMinYMin meet" className="h-full w-full" fill="none" role="img" aria-label="Radiator model">
        <defs>
          <linearGradient id="pipe" x1="0" y1="0" x2="0" y2="1">
            <stop offset="0" stopColor="#7d8c90" />
            <stop offset="0.400" stopColor="#dce5e7" />
            <stop offset="1" stopColor="#5a686b" />
          </linearGradient>
        </defs>
        <Radiator />
        <g stroke="#3467d6" strokeWidth="1">
          <path d="M405 292L388 522" strokeDasharray="14 2" strokeWidth="1.300" />
          <path d="M389 442L803 464M341 413l24-32M568 390L745 438V402M700 407L790 406 900 427" strokeDasharray="8 2" />
          <path d="M1046 515l-14 84" />
        </g>
        <path d="M362 284v14M367 282v16M372 286v12M376 310v10" stroke="#2860dc" />
        <path d="M369 314h15" stroke="#2860dc" strokeWidth="4" />
        <Marker x={366} y={293} />
        <Marker x={405} y={299} />
        <Marker x={353} y={396} />
        <Marker x={394} y={410} />
        <Marker x={596} y={453} />
        <Marker x={786} y={407} />
        <Marker x={1038} y={557} />
        <Marker x={1034} y={444} />
        <Marker x={1062} y={472} />

        {/* work coordinate system */}
        <path d="M1038 443l18 4" stroke="#d05252" strokeWidth="2" />
        <path d="M1064 444V412" stroke="#0d2fd0" strokeWidth="1.500" />
        <path d="M1063 394l3 20-2 16-3-16z" fill="#0d2fd0" />
        <g className="font-['Liberation_Sans',Arial,sans-serif]" fontSize="13">
          <text x="1067" y="394" fill="#3355d8">ZC</text>
          <text x="1023" y="437" fill="#cc4646">XC</text>
          <text x="1030" y="474" fill="#3cb054" fontSize="11">YC</text>
        </g>

        {/* view triad */}
        <path d="M61 641l14-6 13 3v16l-12 6-15-4z" fill="#cfcfd1" stroke="#a5a5a8" />
        <path d="M61 641l14 3 13-6M75 644v16M61 655l13-5 14 4M74 635v15" stroke="#aaaaad" />
        <path d="M88 656l-24-5" stroke="#c07070" />
        <path d="M88 656l-22 6" stroke="#2e9b3c" strokeWidth="1.500" />
        <path d="M64 663l10-5 1 4z" fill="#2e9b3c" />
        <path d="M87 656V634" stroke="#1538c8" strokeWidth="2" />
        <path d="M84 637l3-9 3 9z" fill="#1538c8" />
        <circle cx="88" cy="658" r="3" fill="#d8d8da" stroke="#999" strokeWidth="0.500" />
        <g className="font-['Liberation_Sans',Arial,sans-serif]" fontSize="11">
          <text x="83" y="627" fill="#2347c9">Z</text>
          <text x="57" y="656" fill="#b94a5c">X</text>
          <text x="59" y="669" fill="#2e9b3c">Y</text>
        </g>

        <g className="drop-shadow-[1px_1px_0px_#4a4038]" fill="#e8e8e8">
          <text x="407" y="400" fontSize="56" className="font-['Noto_Sans_CJK_SC',sans-serif] font-light">莫西网</text>
          <text x="576" y="400" fontSize="48" className="font-['Liberation_Mono','Courier_New',monospace]">www.3dmox.com</text>
        </g>
      </svg>
    </main>
  );
}

// ─── Status bar and taskbar ───────────────────────────────────────────────────

function StatusBar() {
  return (
    <div className="flex h-[23px] shrink-0 items-center border-t border-[#f4f4f4] bg-[#d8d8d8] text-[13px] font-bold text-[#111]">
      <p className="w-[46%] truncate pl-[3px]">Select objects and use MB3, or double-click an object</p>
      <div className="h-full flex-1 border-l border-[#b4b4b4]" />
      <div className="h-full w-5 border-x border-[#b4b4b4]" />
      <div className="flex h-full w-[89px] items-center justify-end gap-1 pr-3.5">
        <span className="h-full w-px bg-[#b4b4b4]" />
        <button aria-label="Status options" className="flex h-4 w-4 items-center justify-center bg-[#8c8f92]">
          <Icon size={12} box={12}>
            <path d="M2 10V3M5 10V5M8 10V2M11 10V6" stroke="#6f7478" />
          </Icon>
        </button>
        <button aria-label="Toggle full screen">
          <Icon>
            <path d="M1 4V1h3M12 1h3v3M15 12v3h-3M4 15H1v-3" stroke="#fff" />
            <path d="M3 4h10v9H3z" fill="#fff" stroke="#222" />
            <path d="M5 6h6v4H5z" fill="#4d84d8" />
          </Icon>
        </button>
      </div>
    </div>
  );
}

function ChromeLogo() {
  return (
    <Icon size={29} box={48}>
      <circle cx="24" cy="24" r="22" fill="#f5cd2a" />
      <path d="M24 24L5 13a22 22 0 0138 0z" fill="#dc3a2b" />
      <path d="M5 13a22 22 0 0018 33l10-17-9-5z" fill="#3ba54a" />
      <path d="M24 13h19a22 22 0 01-20 33l11-18z" fill="#f5cd2a" />
      <circle cx="24" cy="24" r="11" fill="#fff" />
      <circle cx="24" cy="24" r="8.500" fill="#4586d8" />
    </Icon>
  );
}

function Taskbar() {
  return (
    <footer className="flex h-[35px] shrink-0 items-center overflow-hidden border-t border-[#0a1d40] bg-linear-to-r from-[#0a4090] via-[#0b56ba] via-45% to-[#06398a] text-white">
      <button aria-label="Start" className="ml-[7px] shrink-0">
        <svg width="38" height="38" viewBox="0 0 38 38" fill="none" aria-hidden="true">
          <defs>
            <radialGradient id="orb" cx="0.500" cy="0.900" r="0.900">
              <stop offset="0" stopColor="#5fc6e6" />
              <stop offset="0.500" stopColor="#245f96" />
              <stop offset="1" stopColor="#7f9db8" />
            </radialGradient>
          </defs>
          <circle cx="19" cy="19" r="18" fill="url(#orb)" stroke="#16335a" />
          <path d="M10 12c3-2 6-2 9 0l-2 7c-3-2-6-2-9 0z" fill="#ec6a32" />
          <path d="M20 12c3 2 6 2 9 0l-2 7c-3 2-6 2-9 0z" fill="#8dc63f" />
          <path d="M8 20c3-2 6-2 9 0l-2 7c-3-2-6-2-9 0z" fill="#4fa4df" />
          <path d="M18 20c3 2 6 2 9 0l-2 7c-3 2-6 2-9 0z" fill="#fbc93a" />
        </svg>
      </button>
      <button aria-label="Explorer" className="ml-7 shrink-0">
        <svg width="32" height="30" viewBox="0 0 32 30" fill="none" aria-hidden="true">
          <path d="M1 4l3-2h8l2 2h13l3 2v24H1z" fill="#f5e29a" stroke="#c9a957" />
          <path d="M3 7h27v6H3z" fill="#fff5c9" />
          <path d="M4 2h4v3H4z" fill="#4c9b53" />
          <path d="M12 3h4v3h-4z" fill="#d05d3b" />
          <path d="M20 3h5v3h-5z" fill="#4c8fd0" />
          <path d="M5 30V19q0-2 2-2h18q2 0 2 2v11h-5v-7H10v7z" fill="#8fcdf0" stroke="#4c93c6" />
        </svg>
      </button>
      <button aria-label="Chrome" className="ml-8 shrink-0">
        <ChromeLogo />
      </button>
      <button aria-label="NX" className="ml-[18px] flex h-[34px] w-[58px] shrink-0 items-center justify-center rounded-sm border border-[#d5e2f5] bg-linear-to-br from-[#d3deee] via-[#93add6] to-[#6e90c8]">
        <Icon size={32} box={32}>
          <circle cx="14" cy="18" r="12" fill="#1f8fd0" />
          <path d="M6 25C2 14 8 9 14 8c-4 6-3 12 2 21-4 1-7-1-10-4z" fill="#8be0f3" />
          <path d="M4 27c12 1 21-5 25-13 3-6-3-7-8-4" stroke="#e59a2c" strokeWidth="2.500" />
          <path d="M3 2l15-2-2 17z" fill="#c41e42" />
          <path d="M3 2l15-2-5 6z" fill="#f0718a" />
        </Icon>
      </button>
      <button aria-label="Chrome window" className="ml-1 flex h-[34px] w-[58px] shrink-0 items-center justify-center rounded-sm border border-[#5c83bf] bg-linear-to-br from-[#7595c9] to-[#2d61b0]">
        <ChromeLogo />
      </button>
      <div className="flex-1" />
      <div className="flex items-center gap-2 text-[12px] leading-[16px]">
        <span className="mr-2">SR</span>
        <Icon>
          <path d="M1 1h14v14H1z" fill="#d31245" />
          <ellipse cx="8" cy="8" rx="3.500" ry="5" stroke="#fff" strokeWidth="1.500" transform="rotate(35 8 8)" />
        </Icon>
        <Icon>
          <path d="M4 5l7 6-3 3V2l3 3-7 6" stroke="#fff" strokeWidth="1.500" />
        </Icon>
        <Icon>
          <path d="M3 3h5v11H3z" stroke="#fff" strokeWidth="1.500" />
          <path d="M4 1h3v2H4zM9 5h6v4l-2 2v4h-2v-4L9 9z" fill="#fff" />
          <path d="M10.500 2v3M13.500 2v3" stroke="#fff" />
        </Icon>
        <Icon>
          <path d="M1 12h2v2H1zM4 10h2v4H4zM7 8h2v6H7zM10 5h2v9h-2zM13 3h2v11h-2z" fill="#fff" />
        </Icon>
        <Icon>
          <path d="M1 6h3l4-4v12l-4-4H1z" fill="#fff" />
          <path d="M10 5q2 3 0 6M12 3q4 5 0 10" stroke="#dfe8f6" />
        </Icon>
        <Icon>
          <path d="M2 1v14" stroke="#fff" strokeWidth="1.500" />
          <path d="M3 2h9v7H3z" fill="#fff" />
          <path d="M7 7h8v8H7z" fill="#d83c2b" />
          <path d="M9 9l4 4M13 9l-4 4" stroke="#fff" strokeWidth="1.300" />
        </Icon>
        <div className="w-[58px] pt-0.5 text-center">
          <div>18:42</div>
          <div>22.2.2015</div>
        </div>
      </div>
      <button aria-label="Show desktop" className="ml-1 h-full w-2 border-l border-[#02204f] bg-linear-to-b from-[#4d80c4] to-[#14407f]" />
    </footer>
  );
}

export default function App() {
  return (
    <div className="flex h-screen flex-col overflow-hidden bg-[#d8d8d8] font-['Open_Sans','Noto_Sans',sans-serif]">
      <TitleBar />
      <TabRow />
      <Ribbon />
      <SelectionBar />
      <div className="flex min-h-0 flex-1">
        <ResourceBar />
        <ModelView />
      </div>
      <StatusBar />
      <Taskbar />
    </div>
  );
}
